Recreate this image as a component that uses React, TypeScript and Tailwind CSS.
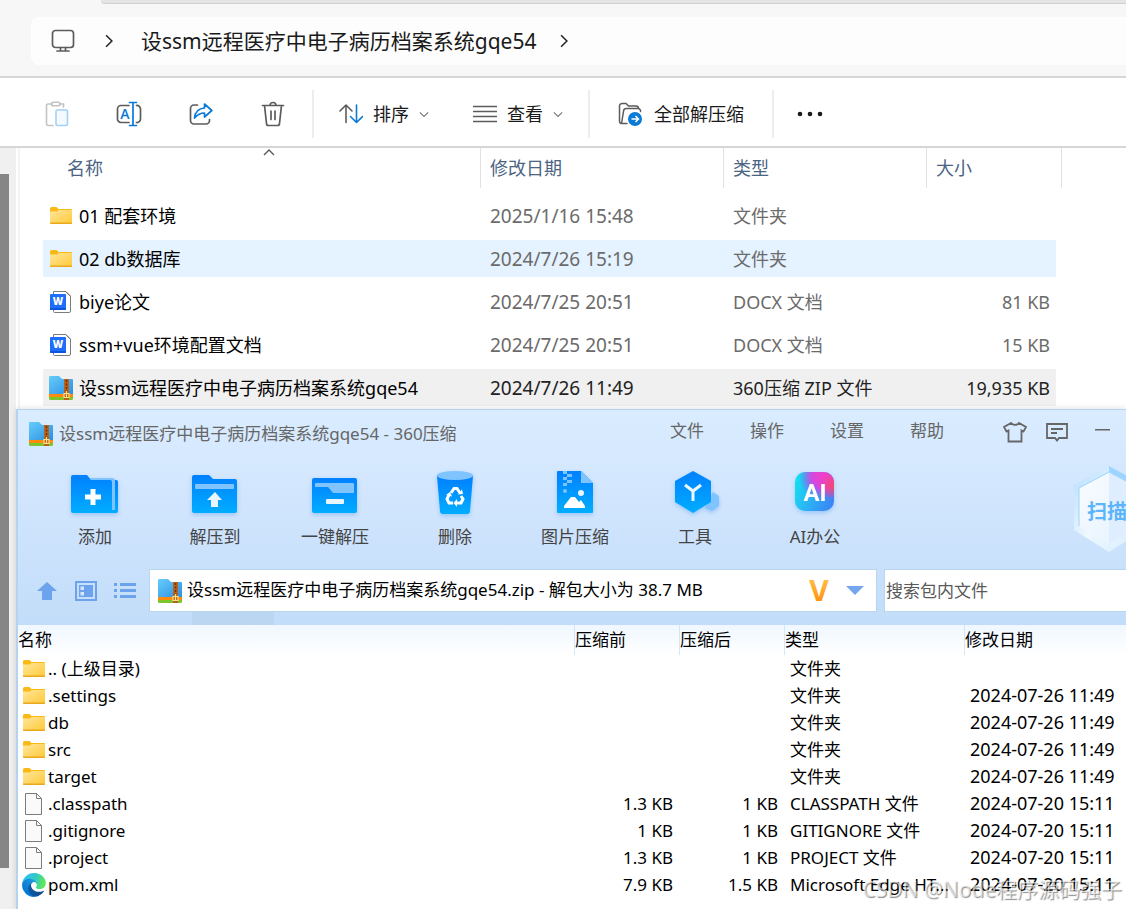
import type { ReactNode } from 'react'
import clsx from 'clsx'

/* ---------- file icons ---------- */

function FolderIcon() {
  return (
    <svg width="24" height="20" viewBox="0 0 24 20" className="shrink-0">
      <defs>
        <linearGradient id="folderBody" x1="0" y1="0" x2="1" y2="1">
          <stop offset="0" stopColor="#ffe69c" />
          <stop offset="1" stopColor="#ffc937" />
        </linearGradient>
      </defs>
      <path d="M1 2.500A1.500 1.500 0 0 1 2.500 1H7.500L9.500 3H22A1 1 0 0 1 23 4V8H1Z" fill="#f9b916" />
      <path d="M1 5.500H8L9.500 4H23V17A1 1 0 0 1 22 18H2A1 1 0 0 1 1 17Z" fill="url(#folderBody)" />
      <path d="M1 16.500V17A1 1 0 0 0 2 18H22A1 1 0 0 0 23 17V16.500Z" fill="#eaa81c" />
    </svg>
  )
}

function WordIcon() {
  return (
    <svg width="24" height="24" viewBox="0 0 24 24" className="shrink-0">
      <path d="M4.500 1.500H17L21.500 6V21A1.500 1.500 0 0 1 20 22.500H5.500A1 1 0 0 1 4.500 21.500Z" fill="#fff" stroke="#7c7c7c" />
      <path d="M17 2 21.500 6.500" fill="none" stroke="#7c7c7c" />
      <rect x="1" y="4" width="16" height="16" rx="1" fill="#1f6dfb" />
      <path d="M1 18H17V19A1 1 0 0 1 16 20H2A1 1 0 0 1 1 19Z" fill="#0d55dd" />
      <text x="9" y="15" textAnchor="middle" fontSize="10" fontWeight="800" fill="#fff" fontFamily="Open Sans, sans-serif">W</text>
    </svg>
  )
}

function ZipIcon() {
  return (
    <svg width="24" height="24" viewBox="0 0 24 24" className="shrink-0">
      <defs>
        <linearGradient id="zipBody" x1="0" y1="0" x2="1" y2="1">
          <stop offset="0" stopColor="#66cdfb" />
          <stop offset="1" stopColor="#2d8fe0" />
        </linearGradient>
      </defs>
      <path d="M0 1A1 1 0 0 1 1 0H10L13 3H23A1 1 0 0 1 24 4V18H0Z" fill="url(#zipBody)" />
      <rect y="18" width="24" height="3" fill="#ff8a0c" />
      <path d="M0 21H24V22.500A1.500 1.500 0 0 1 22.500 24H1.500A1.500 1.500 0 0 1 0 22.500Z" fill="#7cc62c" />
      <rect x="15" y="3" width="5" height="21" fill="#b9601a" />
      <path d="M17.500 4V16" stroke="#6b3208" strokeWidth="1.500" strokeDasharray="2 1.500" />
      <path d="M15 17.500H20V21.500H15ZM17.500 15V21" fill="none" stroke="#ffe08a" strokeWidth="1.200" />
    </svg>
  )
}

function BlankFileIcon() {
  return (
    <svg width="24" height="24" viewBox="0 0 24 24" className="shrink-0">
      <path d="M3.500 1.500H14.500L19.500 6.500V22.500H3.500Z" fill="#fafafa" stroke="#7c7c7c" />
      <path d="M14.500 1.500V6.500H19.500" fill="none" stroke="#7c7c7c" />
    </svg>
  )
}

function EdgeIcon() {
  return (
    <svg width="24" height="24" viewBox="4 4 258 258" className="shrink-0">
      <defs>
        <linearGradient id="edgeDark" x1="63" y1="177" x2="241" y2="177" gradientUnits="userSpaceOnUse">
          <stop offset="0" stopColor="#0c59a4" />
          <stop offset="1" stopColor="#114a8b" />
        </linearGradient>
        <linearGradient id="edgeBlue" x1="150" y1="90" x2="45" y2="220" gradientUnits="userSpaceOnUse">
          <stop offset="0" stopColor="#1b9de2" />
          <stop offset="0.500" stopColor="#1482d4" />
          <stop offset="1" stopColor="#0078d7" />
        </linearGradient>
        <linearGradient id="edgeGreen" x1="20" y1="60" x2="250" y2="130" gradientUnits="userSpaceOnUse">
          <stop offset="0" stopColor="#35c1f1" />
          <stop offset="0.500" stopColor="#2fc8c6" />
          <stop offset="1" stopColor="#66eb4e" />
        </linearGradient>
      </defs>
      <path fill="url(#edgeDark)" d="M235.680 195.460a93.730 93.730 0 0 1-10.540 4.710 101.870 101.870 0 0 1-35.900 6.460c-47.320 0-88.540-32.550-88.540-74.320A31.480 31.480 0 0 1 117.130 105c-42.800 1.800-53.800 46.400-53.800 72.530 0 73.880 68.090 81.370 82.760 81.370 7.910 0 19.840-2.300 27-4.560l1.310-.44a128.340 128.340 0 0 0 66.600-52.800 4 4 0 0 0-5.320-5.640z" />
      <path fill="url(#edgeBlue)" d="M110.340 246.340A79.200 79.200 0 0 1 87.600 225a80.720 80.720 0 0 1 29.530-120c3.120-1.470 8.450-4.130 15.540-4a32.350 32.350 0 0 1 25.690 13 31.880 31.880 0 0 1 6.360 18.660c0-.21 24.460-79.600-80-79.600-43.900 0-80 41.660-80 78.210a130.150 130.150 0 0 0 12.110 56 128 128 0 0 0 156.380 67.110 75.550 75.550 0 0 1-62.780-8z" />
      <path fill="url(#edgeGreen)" d="M156.940 153.780c-.81 1.050-3.300 2.500-3.300 5.660 0 2.610 1.700 5.120 4.720 7.230 14.380 10 41.490 8.680 41.560 8.680a59.560 59.560 0 0 0 30.270-8.350A61.380 61.380 0 0 0 260.630 114c.26-22.410-8-37.310-11.340-43.910C228.090 28.760 182.350 5 132.600 5a128 128 0 0 0-128 126.200c.48-36.540 36.800-66.050 80-66.050 3.500 0 23.460.34 42 10.070 16.340 8.580 24.900 18.940 30.850 29.210 6.180 10.670 7.280 24.150 7.280 29.520s-2.740 13.330-7.790 19.830z" />
    </svg>
  )
}

/* ---------- explorer toolbar icons ---------- */

function MonitorIcon() {
  return (
    <svg width="24" height="24" viewBox="0 0 24 24" fill="none" stroke="#5c5c5c" strokeWidth="1.700" strokeLinecap="round">
      <rect x="1.500" y="1.500" width="21" height="17" rx="3" />
      <path d="M9.500 18.500V22M14.500 18.500V22M6 22H18" />
    </svg>
  )
}

function PasteIcon() {
  return (
    <svg width="24" height="26" viewBox="0 0 24 26" fill="none" strokeWidth="1.600" strokeLinecap="round">
      <path d="M7 3H3A1.500 1.500 0 0 0 1.500 4.500V23A1.500 1.500 0 0 0 3 24.500H8M15 3H18.500V6" stroke="#c4c4c4" />
      <rect x="6.500" y="1.200" width="8.500" height="3.600" rx="1.800" stroke="#c4c4c4" />
      <rect x="11" y="9" width="11.500" height="15.500" rx="1.500" stroke="#a3d2f7" fill="#f4faff" />
    </svg>
  )
}

function RenameIcon() {
  return (
    <svg width="26" height="26" viewBox="0 0 26 26" fill="none" strokeWidth="1.700" strokeLinecap="round">
      <path d="M13 4.500H5A3.500 3.500 0 0 0 1.500 8V18A3.500 3.500 0 0 0 5 21.500H13M20.500 4.500A3.500 3.500 0 0 1 24.500 8V18A3.500 3.500 0 0 1 20.500 21.500" stroke="#5c5c5c" />
      <path d="M17 1.500V24.500M13.500 1.500H20.500M13.500 24.500H20.500" stroke="#0a7ad6" />
      <text x="9" y="18" textAnchor="middle" fontSize="14" fontWeight="600" fill="#0a7ad6" fontFamily="Open Sans, sans-serif">A</text>
    </svg>
  )
}

function ShareIcon() {
  return (
    <svg width="24" height="26" viewBox="0 0 24 26" fill="none" strokeWidth="1.700" strokeLinecap="round" strokeLinejoin="round">
      <path d="M8.500 4H5A3.500 3.500 0 0 0 1.500 7.500V19.500A3.500 3.500 0 0 0 5 23H17A3.500 3.500 0 0 0 20.500 19.500V18.500" stroke="#5c5c5c" />
      <path d="M15.500 3 22.800 9.500 15.500 16V12C11.500 12 8.500 13.500 5.500 17 6 11.500 9.500 7.500 15.500 7Z" stroke="#0a7ad6" />
    </svg>
  )
}

function TrashIcon() {
  return (
    <svg width="24" height="26" viewBox="0 0 24 26" fill="none" stroke="#5c5c5c" strokeWidth="1.700" strokeLinecap="round" strokeLinejoin="round">
      <path d="M1.500 4.500H22.500M9 4.500A3 3 0 0 1 15 4.500M3.500 4.500 5.500 22.500A2 2 0 0 0 7.500 24.500H16.500A2 2 0 0 0 18.500 22.500L20.500 4.500" />
      <path d="M10 10V18.500M14 10V18.500" />
    </svg>
  )
}

function SortIcon() {
  return (
    <svg width="24" height="22" viewBox="0 0 24 22" fill="none" strokeWidth="1.600" strokeLinecap="round" strokeLinejoin="round">
      <path d="M7 19.500V2M1 8 7 2 13 8" stroke="#5c5c5c" />
      <path d="M17.500 2V19.500M11.500 13.500 17.500 19.500 23.500 13.500" stroke="#0a7ad6" />
    </svg>
  )
}

function LinesIcon() {
  return (
    <svg width="24" height="18" viewBox="0 0 24 18" stroke="#5c5c5c" strokeWidth="1.500">
      <path d="M0 1.500H24M0 6.500H24M0 11.500H24M0 16.500H24" />
    </svg>
  )
}

function ExtractIcon() {
  return (
    <svg width="24" height="24" viewBox="0 0 24 24" fill="none">
      <path d="M3 21.500A2 2 0 0 1 1.500 19.500V4A2.500 2.500 0 0 1 4 1.500H8L10.500 4H18A2.500 2.500 0 0 1 20.500 6.500M3.500 21.500 5.500 9.500A3 3 0 0 1 8.500 6.500H20A2.500 2.500 0 0 1 22.500 9.500M3.500 21.500H9" stroke="#5c5c5c" strokeWidth="1.500" strokeLinecap="round" />
      <circle cx="17" cy="17" r="7" fill="#0a7ad6" />
      <path d="M13.500 17H20M17.500 14 20.500 17 17.500 20" stroke="#fff" strokeWidth="1.500" />
    </svg>
  )
}

function Chevron({ d, size, color }: { d: string; size: number; color: string }) {
  return (
    <svg width={size} height={size} viewBox="0 0 12 12" fill="none" stroke={color} strokeWidth="1.300" className="shrink-0">
      <path d={d} />
    </svg>
  )
}

/* ---------- archive window icons ---------- */

function ToolSvg({ children }: { children: ReactNode }) {
  return (
    <svg width="52" height="48" viewBox="0 0 52 48" className="drop-shadow-[0_2px_2px_rgba(60,140,240,0.35)]">
      <defs>
        <linearGradient id="toolBlue" x1="0" y1="0" x2="0" y2="1">
          <stop offset="0" stopColor="#0080ff" />
          <stop offset="1" stopColor="#00adff" />
        </linearGradient>
      </defs>
      {children}
    </svg>
  )
}

const addIcon = (
  <ToolSvg>
    <path d="M41 10H47A2 2 0 0 1 49 12V41A2 2 0 0 1 47 43H38Z" fill="url(#toolBlue)" />
    <path d="M21 8H43A3 3 0 0 1 46 11V40H42Z" fill="#80c4ff" />
    <path d="M2 7A2 2 0 0 1 4 5H18L22 10H41A2 2 0 0 1 43 12V43H4A2 2 0 0 1 2 41Z" fill="url(#toolBlue)" />
    <path d="M24 19V35M16 27H32" stroke="#fff" strokeWidth="5" />
  </ToolSvg>
)

const extractToIcon = (
  <ToolSvg>
    <path d="M3 7A2 2 0 0 1 5 5H20L24 9H46A2 2 0 0 1 48 11V41A2 2 0 0 1 46 43H5A2 2 0 0 1 3 41Z" fill="url(#toolBlue)" />
    <rect x="6" y="14" width="39" height="5" rx="1" fill="#80c4ff" />
    <path d="M26 22 33 30H29V37H22V30H18Z" fill="#e8f6ff" />
  </ToolSvg>
)

const oneKeyIcon = (
  <ToolSvg>
    <rect x="3" y="8" width="45" height="35" rx="2" fill="url(#toolBlue)" />
    <path d="M6 14A1 1 0 0 1 7 13H44A1 1 0 0 1 45 14V23H24L19 17H6Z" fill="#80c4ff" />
    <rect x="17" y="29" width="18" height="5" rx="1" fill="#e8f6ff" />
  </ToolSvg>
)

const deleteIcon = (
  <ToolSvg>
    <path d="M8 6H44L41 41A3 3 0 0 1 38 44H14A3 3 0 0 1 11 41Z" fill="url(#toolBlue)" />
    <ellipse cx="26" cy="5.500" rx="18" ry="4.500" fill="#80c4ff" />
    <g fill="none" stroke="#fff" strokeWidth="3">
      <path d="M22 23 25 18.500H28L31 23" />
      <path d="M20 25 18 29 20 33H24" />
      <path d="M32 26 34 29 32 33H27" />
    </g>
    <path d="M29 24.500 34 24 33 19.500ZM28 29V37L24.500 33ZM17 25 21 22 23 26.500Z" fill="#fff" />
  </ToolSvg>
)

const imageIcon = (
  <ToolSvg>
    <path d="M8 2A1 1 0 0 1 9 1H32L44 13V42A1 1 0 0 1 43 43H9A1 1 0 0 1 8 42Z" fill="url(#toolBlue)" />
    <path d="M32 1 44 13H32Z" fill="#80c4ff" />
    <path d="M14 1H18V4H14ZM18 4H23V7H18ZM14 7H18V10H14ZM18 10H23V13H18ZM14 13H18V16H14Z" fill="#80c4ff" />
    <circle cx="16" cy="21" r="2" fill="#80c4ff" />
    <path d="M15 38V36L22 27H26L30 32L32 30L36 36V38Z" fill="#fff" />
    <circle cx="32" cy="23" r="3" fill="#e8f6ff" />
  </ToolSvg>
)

const boxIcon = (
  <ToolSvg>
    <path d="M44 22 50 26V36L43 41 36 38Z" fill="#80c4ff" />
    <path d="M24 1 42 11V32L24 43 6 32V11Z" fill="url(#toolBlue)" />
    <path d="M16 15 24 21 32 15M24 21V31" fill="none" stroke="#eef8ff" strokeWidth="3" />
  </ToolSvg>
)

const aiIcon = (
  <ToolSvg>
    <defs>
      <linearGradient id="aiBase" x1="0" y1="0.300" x2="1" y2="0.700">
        <stop offset="0" stopColor="#12dff0" />
        <stop offset="0.400" stopColor="#2ab8f4" />
        <stop offset="1" stopColor="#3a86f5" />
      </linearGradient>
      <radialGradient id="aiPink" cx="0.750" cy="0.100" r="0.650">
        <stop offset="0" stopColor="#f43fc4" />
        <stop offset="0.500" stopColor="#d448e0" />
        <stop offset="1" stopColor="#8a55f0" stopOpacity="0" />
      </radialGradient>
      <radialGradient id="aiRed" cx="1" cy="0.350" r="0.350">
        <stop offset="0" stopColor="#fb4668" />
        <stop offset="1" stopColor="#fb4668" stopOpacity="0" />
      </radialGradient>
    </defs>
    <rect x="6" y="2" width="39" height="39" rx="10" fill="url(#aiBase)" />
    <rect x="6" y="2" width="39" height="39" rx="10" fill="url(#aiPink)" />
    <rect x="6" y="2" width="39" height="39" rx="10" fill="url(#aiRed)" />
    <text x="26" y="31" textAnchor="middle" fontSize="24" fontWeight="700" fill="#fff" fontFamily="Roboto, sans-serif">AI</text>
  </ToolSvg>
)

/* ---------- data ---------- */

const explorerFiles = [
  { name: '01 配套环境', icon: <FolderIcon />, date: '2025/1/16 15:48', type: '文件夹', size: '' },
  { name: '02 db数据库', icon: <FolderIcon />, date: '2024/7/26 15:19', type: '文件夹', size: '', state: 'hover' },
  { name: 'biye论文', icon: <WordIcon />, date: '2024/7/25 20:51', type: 'DOCX 文档', size: '81 KB' },
  { name: 'ssm+vue环境配置文档', icon: <WordIcon />, date: '2024/7/25 20:51', type: 'DOCX 文档', size: '15 KB' },
  { name: '设ssm远程医疗中电子病历档案系统gqe54', icon: <ZipIcon />, date: '2024/7/26 11:49', type: '360压缩 ZIP 文件', size: '19,935 KB', state: 'selected' },
]

const archiveTools = [
  { label: '添加', icon: addIcon },
  { label: '解压到', icon: extractToIcon },
  { label: '一键解压', icon: oneKeyIcon },
  { label: '删除', icon: deleteIcon },
  { label: '图片压缩', icon: imageIcon },
  { label: '工具', icon: boxIcon },
  { label: 'AI办公', icon: aiIcon },
]

const archiveFiles = [
  { name: '.. (上级目录)', icon: <FolderIcon />, before: '', after: '', type: '文件夹', date: '' },
  { name: '.settings', icon: <FolderIcon />, before: '', after: '', type: '文件夹', date: '2024-07-26 11:49' },
  { name: 'db', icon: <FolderIcon />, before: '', after: '', type: '文件夹', date: '2024-07-26 11:49' },
  { name: 'src', icon: <FolderIcon />, before: '', after: '', type: '文件夹', date: '2024-07-26 11:49' },
  { name: 'target', icon: <FolderIcon />, before: '', after: '', type: '文件夹', date: '2024-07-26 11:49' },
  { name: '.classpath', icon: <BlankFileIcon />, before: '1.3 KB', after: '1 KB', type: 'CLASSPATH 文件', date: '2024-07-20 15:11' },
  { name: '.gitignore', icon: <BlankFileIcon />, before: '1 KB', after: '1 KB', type: 'GITIGNORE 文件', date: '2024-07-20 15:11' },
  { name: '.project', icon: <BlankFileIcon />, before: '1.3 KB', after: '1 KB', type: 'PROJECT 文件', date: '2024-07-20 15:11' },
  { name: 'pom.xml', icon: <EdgeIcon />, before: '7.9 KB', after: '1.5 KB', type: 'Microsoft Edge HT...', date: '2024-07-20 15:11' },
]

/* ---------- explorer ---------- */

function AddressBar() {
  return (
    <header className="h-[78px] shrink-0 overflow-hidden border-b-2 border-[#d6d6d6] bg-[#f7f7f7]">
      <div className="ml-[101px] h-1 rounded-bl-md border-b border-[#d0d0d0] bg-[#e4e4e4]" />
      <nav className="mt-[13px] ml-[31px] flex h-12 items-center rounded-l-lg bg-[#fdfdfd] pl-5 text-[#1a1a1a]">
        <button aria-label="此电脑">
          <MonitorIcon />
        </button>
        <span className="ml-6 flex w-5 justify-center">
          <Chevron d="M3.500 1 8.500 6 3.500 11" size={14} color="#222" />
        </span>
        <a href="#folder" className="ml-[22px] pt-px text-[21px] whitespace-nowrap">设ssm远程医疗中电子病历档案系统gqe54</a>
        <span className="ml-[18px] flex w-5 justify-center">
          <Chevron d="M3.500 1 8.500 6 3.500 11" size={14} color="#222" />
        </span>
      </nav>
    </header>
  )
}

function Separator() {
  return <div className="mx-[3px] h-12 w-[2px] bg-[#ededed]" />
}

function ExplorerToolbar() {
  return (
    <div className="flex h-[70px] shrink-0 items-center border-b-2 border-[#d6d6d6] bg-white pt-1 pl-[21px] text-[18px] text-[#1a1a1a]">
      <button aria-label="粘贴" disabled className="flex w-[72px] justify-center"><PasteIcon /></button>
      <button aria-label="重命名" className="flex w-[72px] justify-center"><RenameIcon /></button>
      <button aria-label="共享" className="flex w-[72px] justify-center"><ShareIcon /></button>
      <button aria-label="删除" className="flex w-[72px] justify-center"><TrashIcon /></button>
      <Separator />
      <button className="flex items-center gap-[10px] px-[22px] whitespace-nowrap">
        <SortIcon />
        排序
        <Chevron d="M1 4 6 9 11 4" size={10} color="#777" />
      </button>
      <button className="flex items-center gap-[10px] px-[22px] whitespace-nowrap">
        <LinesIcon />
        查看
        <Chevron d="M1 4 6 9 11 4" size={10} color="#777" />
      </button>
      <Separator />
      <button className="flex items-center gap-3 px-[25px] whitespace-nowrap">
        <ExtractIcon />
        全部解压缩
      </button>
      <Separator />
      <button aria-label="查看更多" className="px-5">
        <svg width="26" height="6" viewBox="0 0 26 6" fill="#1a1a1a">
          <circle cx="3" cy="3" r="2.300" />
          <circle cx="13" cy="3" r="2.300" />
          <circle cx="23" cy="3" r="2.300" />
        </svg>
      </button>
    </div>
  )
}

function ExplorerTable() {
  return (
    <div className="ml-[2px] border-l-2 border-[#f3f3f3] bg-white pr-[64px] pl-[23px]">
      <table className="w-full table-fixed border-separate border-spacing-0 text-left whitespace-nowrap">
        <colgroup>
          <col />
          <col className="w-[243px]" />
          <col className="w-[203px]" />
          <col className="w-[130px]" />
          <col className="w-[6px]" />
        </colgroup>
        <thead className="text-[18px] text-[#4a6482]">
          <tr className="h-[46px] align-top">
            <th className="relative p-0 font-normal">
              <div className="flex h-10 items-center pl-6">名称</div>
              <span className="absolute top-0 left-[220px]">
                <Chevron d="M1 7 6 2 11 7" size={12} color="#555" />
              </span>
            </th>
            <th className="p-0 font-normal"><div className="flex h-10 items-center border-l border-[#e2e2e2] pl-[9px]">修改日期</div></th>
            <th className="p-0 font-normal"><div className="flex h-10 items-center border-l border-[#e2e2e2] pl-[9px]">类型</div></th>
            <th colSpan={2} className="p-0 font-normal"><div className="flex h-10 items-center border-x border-[#e2e2e2] pl-[9px]">大小</div></th>
          </tr>
        </thead>
        <tbody>
          {explorerFiles.map(file => {
            const cell = clsx(
              'h-[43px] border-y-[3px] border-transparent bg-clip-padding pt-px pb-0',
              file.state === 'hover' && 'bg-[#e5f2ff]',
              file.state === 'selected' && 'bg-[#f0f0f0]',
              file.state === 'selected' ? 'text-[#222]' : 'text-[#6b6b6b]',
            )
            return (
              <tr key={file.name}>
                <td className={clsx(cell, 'pr-0 pl-[6px]')}>
                  <div className="flex items-center gap-[6px] text-[18px] text-black">
                    {file.icon}
                    {file.name}
                  </div>
                </td>
                <td className={clsx(cell, 'pr-0 pl-[10px] text-[19px]')}>{file.date}</td>
                <td className={clsx(cell, 'pr-0 pl-[10px] text-[18px]')}>{file.type}</td>
                <td className={clsx(cell, 'pr-[6px] pl-0 text-right text-[18px]')}>{file.size}</td>
                <td className="p-0" />
              </tr>
            )
          })}
        </tbody>
      </table>
    </div>
  )
}

/* ---------- archive window ---------- */

function ArchiveTitleBar() {
  return (
    <div className="flex h-12 items-center pl-[11px] text-[17px] text-[#666]">
      <ZipIcon />
      <h1 className="ml-[6px] flex-1 truncate">设ssm远程医疗中电子病历档案系统gqe54 - 360压缩</h1>
      <nav className="flex pb-[6px] whitespace-nowrap">
        <button className="w-20">文件</button>
        <button className="w-20">操作</button>
        <button className="w-20">设置</button>
        <button className="w-20">帮助</button>
      </nav>
      <div className="ml-9 flex items-center pb-1">
        <button aria-label="换肤">
          <svg width="24" height="22" viewBox="0 0 24 22" fill="none" stroke="#666" strokeWidth="1.800">
            <path d="M8 2 1 6 3.500 10.500 5.500 9.500V20.500H18.500V9.500L20.500 10.500 23 6 16 2C14.500 4.500 9.500 4.500 8 2Z" />
          </svg>
        </button>
        <button aria-label="反馈" className="ml-[18px]">
          <svg width="24" height="22" viewBox="0 0 24 22" fill="none" stroke="#666" strokeWidth="1.800">
            <path d="M2 3H22V17H14L12 19.500 10 17H2Z" />
            <path d="M6 8H18M6 12H12" />
          </svg>
        </button>
        <button aria-label="最小化" className="mr-4 ml-[26px] pb-1">
          <svg width="15" height="2" viewBox="0 0 15 2">
            <rect width="15" height="1.500" fill="#666" />
          </svg>
        </button>
      </div>
    </div>
  )
}

function ScanBadge() {
  return (
    <button className="relative mt-2 ml-auto h-[92px] w-[56px] shrink-0 overflow-hidden text-left">
      <svg width="80" height="92" viewBox="0 0 80 92" className="absolute top-0 left-0">
        <defs>
          <linearGradient id="scanEdge" x1="0" y1="0" x2="1" y2="1">
            <stop offset="0" stopColor="#b4defe" />
            <stop offset="0.500" stopColor="#eef8ff" />
            <stop offset="1" stopColor="#d5ecfe" />
          </linearGradient>
          <linearGradient id="scanFace" x1="0" y1="0" x2="1" y2="1">
            <stop offset="0" stopColor="#f9fcff" />
            <stop offset="1" stopColor="#e4f1fe" />
          </linearGradient>
        </defs>
        <path d="M39 0 74 19V64L39 86 4 64V19Z" fill="url(#scanEdge)" />
        <path d="M39 0 74 19V27L39 6Z" fill="#9dd3ff" />
        <path d="M39 6 69 22V60L39 78 9 60V22Z" fill="url(#scanFace)" />
        <path d="M39 6 69 22V60L39 78Z" fill="#dfeefe" />
        <path d="M9 22 39 6 69 22M9 22V60" fill="none" stroke="#9fd3fb" />
      </svg>
      <span className="relative pl-[17px] text-[20px] font-bold whitespace-nowrap text-[#5cb4fb]">扫描</span>
    </button>
  )
}

function ArchiveAddressRow() {
  return (
    <div className="flex h-[43px] items-center pl-[18px]">
      <button aria-label="上一级" className="shrink-0">
        <svg width="22" height="20" viewBox="0 0 22 20" fill="#6ca3ec">
          <path d="M11 1 21 10H16V19H6V10H1Z" />
        </svg>
      </button>
      <button aria-label="大图标" className="ml-[17px] shrink-0">
        <svg width="22" height="20" viewBox="0 0 22 20">
          <rect x="1" y="1" width="20" height="18" fill="none" stroke="#6ca3ec" strokeWidth="2" />
          <rect x="4" y="4" width="14" height="12" fill="#6ca3ec" />
          <path d="M5.500 5.500H9V9H5.500ZM5.500 11H9V14.500H5.500Z" fill="#d4e7fc" />
        </svg>
      </button>
      <button aria-label="列表" className="ml-[17px] shrink-0">
        <svg width="22" height="18" viewBox="0 0 22 18" fill="#6ca3ec">
          <path d="M0 1H3V4H0ZM6 1H22V4H6ZM0 7H3V10H0ZM6 7H22V10H6ZM0 13H3V16H0ZM6 13H22V16H6Z" />
        </svg>
      </button>
      <div className="ml-[13px] flex h-full min-w-0 flex-1 items-center border border-[#b9d5f0] bg-white pr-3 pl-2">
        <ZipIcon />
        <input
          aria-label="路径"
          readOnly
          defaultValue="设ssm远程医疗中电子病历档案系统gqe54.zip - 解包大小为 38.7 MB"
          className="ml-[5px] min-w-0 flex-1 bg-transparent pb-px text-[17px] text-black outline-none"
        />
        <svg width="32" height="36" viewBox="0 0 32 36" className="shrink-0">
          <defs>
            <linearGradient id="vip" x1="0" y1="0" x2="0" y2="1">
              <stop offset="0" stopColor="#ffc94f" />
              <stop offset="1" stopColor="#ff8400" />
            </linearGradient>
          </defs>
          <text x="16" y="28" textAnchor="middle" fontSize="28" fontWeight="700" fill="url(#vip)" fontFamily="Inter, sans-serif">V</text>
        </svg>
        <button aria-label="展开路径" className="ml-[11px] shrink-0">
          <svg width="18" height="10" viewBox="0 0 18 10" fill="#74a6ee">
            <path d="M0 0H18L9 9Z" />
          </svg>
        </button>
      </div>
      <input
        type="search"
        aria-label="搜索包内文件"
        placeholder="搜索包内文件"
        className="ml-[7px] h-full w-[242px] rounded-none border border-r-0 border-[#b9d5f0] bg-white pb-px pl-px text-[17px] outline-none placeholder:text-[#5a5a5a]"
      />
    </div>
  )
}

function ArchiveTable() {
  const head = 'h-[30px] border-l border-[#d3e7f9] p-0 font-normal'
  return (
    <table className="w-full table-fixed border-separate border-spacing-0 text-left text-[17px] whitespace-nowrap text-black">
      <colgroup>
        <col />
        <col className="w-[105px]" />
        <col className="w-[105px]" />
        <col className="w-[180px]" />
        <col className="w-[162px]" />
      </colgroup>
      <thead className="bg-linear-to-b from-[#f0f7ff] to-white">
        <tr>
          <th className="h-[30px] p-0 font-normal">名称</th>
          <th className={head}>压缩前</th>
          <th className={head}>压缩后</th>
          <th className={head}>类型</th>
          <th className={head}>修改日期</th>
        </tr>
      </thead>
      <tbody>
        {archiveFiles.map(file => (
          <tr key={file.name} className="h-[27px]">
            <td className="p-0 pl-1">
              <div className="flex h-[27px] items-center gap-[2px]">
                {file.icon}
                {file.name}
              </div>
            </td>
            <td className="p-0 pr-[6px] text-right">{file.before}</td>
            <td className="p-0 pr-[6px] text-right">{file.after}</td>
            <td className="p-0 pl-[6px]">{file.type}</td>
            <td className="p-0 pl-[6px] text-[18px]">{file.date}</td>
          </tr>
        ))}
      </tbody>
    </table>
  )
}

function ArchiveWindow() {
  return (
    <section className="flex-1 border-t border-l-2 border-[#b5d3ee] bg-white shadow-[0_0_6px_rgba(0,0,0,0.15)]">
      <div className="bg-linear-to-b from-[#daecff] via-[#cfe4fd] to-[#c2ddf9]">
        <ArchiveTitleBar />
        <div className="flex h-[111px] items-start pl-[17px]">
          {archiveTools.map(tool => (
            <button key={tool.label} className="flex w-[120px] shrink-0 flex-col items-center pt-3 text-[17px] text-[#444]">
              {tool.icon}
              <span className="pt-[7px] leading-6">{tool.label}</span>
            </button>
          ))}
          <ScanBadge />
        </div>
        <ArchiveAddressRow />
        <div className="h-[13px] pl-[174px]">
          <div className="h-full w-[82px] bg-[#bad6f0]" />
        </div>
      </div>
      <ArchiveTable />
    </section>
  )
}

export default function App() {
  return (
    <div className="relative flex min-h-screen flex-col overflow-hidden bg-white font-['Noto_Sans','Noto_Sans_CJK_SC',sans-serif]">
      <AddressBar />
      <ExplorerToolbar />
      <div className="flex flex-1">
        {/* scroll bar of the navigation pane */}
        <div className="flex w-4 shrink-0 flex-col bg-[#f0f0f0] pt-[26px] pb-[41px]">
          <div className="w-[9px] flex-1 bg-[#868686]" />
        </div>
        <main className="flex min-w-0 flex-1 flex-col">
          <ExplorerTable />
          <ArchiveWindow />
        </main>
      </div>
      <span className="pointer-events-none absolute right-1 bottom-1 text-[21px] leading-8 whitespace-nowrap text-white/60 [text-shadow:1px_1px_1px_rgba(0,0,0,0.45)]">
        CSDN @Node程序源码强子
      </span>
    </div>
  )
}
